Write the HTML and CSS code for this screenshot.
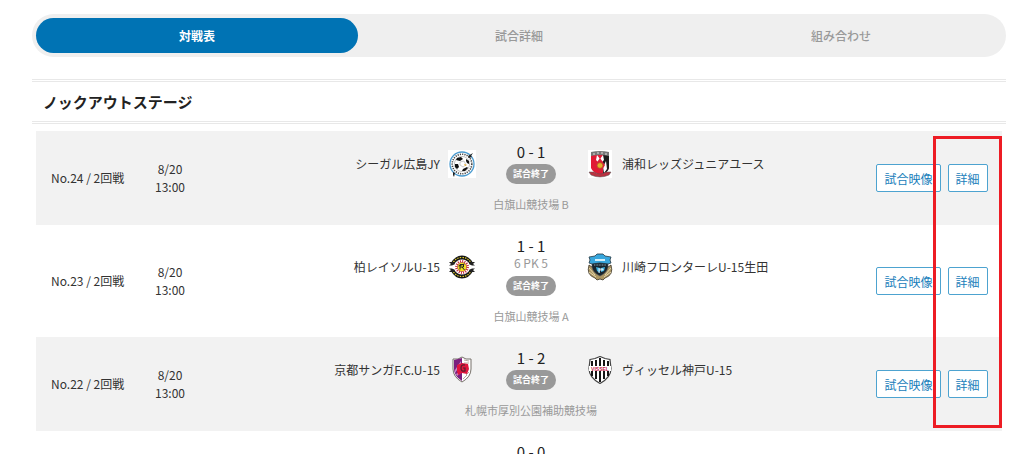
FILE: index.html
```html
<!DOCTYPE html>
<html lang="ja">
<head>
  <meta charset="UTF-8">
  <title>対戦表 - ノックアウトステージ</title>
  <meta name="viewport" content="width=device-width, initial-scale=1">
  <link rel="stylesheet" href="styles.css">
</head>
<body>
  <main class="page">
    <nav class="tabs">
      <a class="tab active" href="#table">対戦表</a>
      <a class="tab" href="#detail">試合詳細</a>
      <a class="tab" href="#bracket">組み合わせ</a>
    </nav>

    <h2 class="stage">ノックアウトステージ</h2>

    <div class="matches">
      <table class="match-table">
        <colgroup>
          <col class="col-no">
          <col class="col-date">
          <col>
          <col class="col-actions">
        </colgroup>
        <tbody>
          <tr>
            <td class="no">No.24 / 2回戦</td>
            <td class="date">8/20<br>13:00</td>
            <td>
              <div class="match">
                <div class="team home">
                  <span>シーガル広島JY</span>
                  <svg class="logo" viewBox="0 0 28 28">
                    <rect width="28" height="28" fill="#fff"/>
                    <circle cx="14" cy="14" r="12" fill="#fff" stroke="#4b9bd0" stroke-width="1.3"/>
                    <circle cx="14" cy="14" r="9.8" fill="none" stroke="#444" stroke-width="1.6" stroke-dasharray="1.2 1.1"/>
                    <circle cx="14" cy="14" r="7.6" fill="#fff" stroke="#999" stroke-width=".6"/>
                    <path d="M9 8l4-1 2 2-3 2-4-1zM18 9l3 2 0 3-2-1-1-2zM7 14l3 0 1 3-2 2-2-2zM15 19l4-2 1 1-3 3-3 0z" fill="#111"/>
                    <path d="M12 12l4-1 2 4-3 2-3-2z" fill="#fff" stroke="#999" stroke-width=".5"/>
                    <path d="M16 14l3 1-2 1z" fill="#e9a820"/>
                    <path d="M20 6l5-3-2 3 1 1-3 1zM5 22l2 1-1 4-1-2z" fill="#222"/>
                  </svg>
                </div>
                <div class="result">
                  <span class="score">0 - 1</span>
                  <span class="status">試合終了</span>
                </div>
                <div class="team away">
                  <svg class="logo" viewBox="0 0 28 28">
                    <rect x="2" width="24" height="28" fill="#fff"/>
                    <path d="M5 4q9-2 18 0v14q-2 5-9 7-7-2-9-7z" fill="#e11a35"/>
                    <path d="M17 4h6v14q-1 4-6 6z" fill="#1c1c1c"/>
                    <path d="M11 5l3 4 3-4 1 5-4 4-4-4zM17 17l3-6 1 8-3 4z" fill="#fff"/>
                    <path d="M14 8l5 7-5 9-5-9z" fill="#d8203a"/>
                    <circle cx="14" cy="15.5" r="2.8" fill="#e2b32b" stroke="#b75b22" stroke-width=".7"/>
                    <path d="M5 2q9-2 18 0v4q-9-2-18 0z" fill="#777"/>
                    <path d="M7 4h2m2-1h2m2 0h2m2 1h2" stroke="#ddd" stroke-width="1"/>
                    <path d="M3 22l5 0q6 4 12 0l5 0-2 3q-9 4-18 0z" fill="#b83240" stroke="#555" stroke-width=".5"/>
                  </svg>
                  <span>浦和レッズジュニアユース</span>
                </div>
              </div>
              <p class="venue">白旗山競技場 B</p>
            </td>
            <td class="actions">
              <div class="buttons">
                <button type="button" class="btn">試合映像</button>
                <button type="button" class="btn">詳細</button>
              </div>
            </td>
          </tr>
          <tr>
            <td class="no">No.23 / 2回戦</td>
            <td class="date">8/20<br>13:00</td>
            <td>
              <div class="match">
                <div class="team home">
                  <span>柏レイソルU-15</span>
                  <svg class="logo" viewBox="0 0 28 28">
                    <path d="M3 10Q7 2.500 14 2.500t11 7.500l-3 1.500q-3-5-8-5t-8 5zM3 18q4 7.500 11 7.500t11-7.500l-3-1.500q-3 5-8 5t-8-5z" fill="#161616"/>
                    <path d="M5.500 9q3-4.500 8.500-4.500T22.500 9M5.500 19q3 4.500 8.500 4.500t8.500-4.500" fill="none" stroke="#e8d529" stroke-width="1.200" stroke-dasharray="1.400 1.200"/>
                    <path d="M1 9h4l2 2-3 1.500H1L3 11zM27 9h-4l-2 2 3 1.500h3L25 11zM1 19h4l2-2-3-1.500H1L3 17zM27 19h-4l-2-2 3-1.500h3L25 17z" fill="#222"/>
                    <circle cx="14" cy="14" r="7" fill="#fff"/>
                    <circle cx="14" cy="14" r="5.700" fill="none" stroke="#c8233a" stroke-width="2.400" stroke-dasharray="1 1.200"/>
                    <circle cx="14" cy="14" r="4.600" fill="#f4e224" stroke="#a72b2b" stroke-width=".6"/>
                    <path d="M12 11.500v5M12 11.500h3.500v2.500H12m2 0l2.500 3M10.500 13l6-2" fill="none" stroke="#222" stroke-width="1"/>
                  </svg>
                </div>
                <div class="result">
                  <span class="score">1 - 1</span>
                  <span class="pk">6 PK 5</span>
                  <span class="status">試合終了</span>
                </div>
                <div class="team away">
                  <svg class="logo" viewBox="0 0 28 28">
                    <path d="M3 12q-3 10 6 13l2 2 3-1 3 1 2-2q9-3 6-13l-3 2H6z" fill="#ac9662" stroke="#3c3527" stroke-width=".8"/>
                    <path d="M3 15l6 7M3 19l7 5M25 15l-6 7M25 19l-7 5" stroke="#e3d6ad" stroke-width="1"/>
                    <path d="M6 6h16v8q-1 6-8 9-7-3-8-9z" fill="#17252e" stroke="#555" stroke-width=".6"/>
                    <path d="M3 4l6-1 2-2h6l2 2 6 1-1 3 1 3-3 1q-8-2-16 0l-3-1 1-3z" fill="#38a6dc" stroke="#263942" stroke-width=".8"/>
                    <path d="M9 6h10v2H9z" fill="#d4eff9"/>
                    <path d="M8 12h12" stroke="#8fa8b2" stroke-width="1" stroke-dasharray="1 .6"/>
                    <path d="M10 14l4 1v5l-3-2zM15 15l4-1-1 4-3 1z" fill="#3cb0df"/>
                    <path d="M12 16h5v1h-4v3" fill="none" stroke="#fff" stroke-width=".8"/>
                  </svg>
                  <span>川崎フロンターレU-15生田</span>
                </div>
              </div>
              <p class="venue">白旗山競技場 A</p>
            </td>
            <td class="actions">
              <div class="buttons">
                <button type="button" class="btn">試合映像</button>
                <button type="button" class="btn">詳細</button>
              </div>
            </td>
          </tr>
          <tr>
            <td class="no">No.22 / 2回戦</td>
            <td class="date">8/20<br>13:00</td>
            <td>
              <div class="match">
                <div class="team home">
                  <span>京都サンガF.C.U-15</span>
                  <svg class="logo" viewBox="0 0 28 28">
                    <path d="M5 3l5 0 4-2 4 2h5v10q0 8-9 13-9-5-9-13z" fill="#fff" stroke="#77716a" stroke-width="1"/>
                    <path d="M6 4l8-2v23q-8-5-8-12z" fill="#7b1f7e"/>
                    <path d="M7 14l6-9v3l-6 9zM8 18l5-3v2l-4 3z" fill="#c88cc7"/>
                    <path d="M16 4l5 1M16 7l5 0M18 19l3-3M15 23l4-4" stroke="#b9aaa2" stroke-width="1"/>
                    <path d="M9 9l5-2 6 1 1 5-2 5-5-1-4 2-1-4z" fill="#e0163e"/>
                    <path d="M17 9q-4-1-4 3t4 3v-3h-2" fill="none" stroke="#54202d" stroke-width="1.200"/>
                  </svg>
                </div>
                <div class="result">
                  <span class="score">1 - 2</span>
                  <span class="status">試合終了</span>
                </div>
                <div class="team away">
                  <svg class="logo" viewBox="0 0 28 28">
                    <path d="M4 3.500l5-1 5-2 5 2 5 1 1 9q0 9-11 15Q3 21.500 3 12.500z" fill="#fff" stroke="#444" stroke-width="1.200"/>
                    <path d="M6 5v15M10 4v19M14 2v24M18 4v19M22 5v15" stroke="#151515" stroke-width="2"/>
                    <path d="M3 10h22v5H3z" fill="#fff"/>
                    <text class="crest-text" x="14" y="14.500">VISSEL</text>
                  </svg>
                  <span>ヴィッセル神戸U-15</span>
                </div>
              </div>
              <p class="venue">札幌市厚別公園補助競技場</p>
            </td>
            <td class="actions">
              <div class="buttons">
                <button type="button" class="btn">試合映像</button>
                <button type="button" class="btn">詳細</button>
              </div>
            </td>
          </tr>
          <tr>
            <td></td>
            <td></td>
            <td>
              <div class="match">
                <div class="team home"></div>
                <div class="result">
                  <span class="score">0 - 0</span>
                </div>
                <div class="team away"></div>
              </div>
            </td>
            <td></td>
          </tr>
        </tbody>
      </table>
      <div class="highlight"></div>
    </div>
  </main>
</body>
</html>
```

FILE: styles.css
```css
* {
  box-sizing: border-box;
}

body {
  font-family: "Noto Sans CJK JP", sans-serif;
  font-size: 12px;
  line-height: 18px;
  background: #fff;
  color: #333;
  margin: 0;
}

.page {
  height: 100vh;
  padding: 14px 18px 0 32px;
  overflow: hidden;
}

/* tabs */
.tabs {
  display: flex;
  padding: 4px;
  background: #efefef;
  border-radius: 22px;
}

.tab {
  flex: 1;
  line-height: 35px;
  border-radius: 18px;
  color: #999;
  font-weight: 500;
  text-align: center;
  text-decoration: none;
}

.tab.active {
  background: #0073b4;
  color: #fff;
  font-weight: bold;
}

.stage {
  margin: 22px 0 7px;
  padding: 0 11px;
  border-top: 3px double #e8e8e8;
  border-bottom: 3px double #e8e8e8;
  color: #222;
  font-size: 15px;
  line-height: 39px;
}

/* match list */
.matches {
  position: relative;
  margin: 0 4px;
}

.match-table {
  width: 100%;
  table-layout: fixed;
  border-collapse: collapse;
}

.col-no {
  width: 104px;
}

.col-date {
  width: 60px;
}

.col-actions {
  width: 140px;
}

td {
  padding: 12px 0;
  vertical-align: middle;
}

tr:nth-child(odd) {
  background: #f2f2f2;
}

tr:nth-child(even) {
  background: #fff;
}

.no {
  padding-left: 15px;
  white-space: nowrap;
}

.date {
  text-align: center;
}

.match {
  display: flex;
  align-items: center;
}

.team {
  flex: 1;
  display: flex;
  align-items: center;
  gap: 8px;
}

.home {
  justify-content: flex-end;
}

.logo {
  width: 28px;
  height: 28px;
}

.crest-text {
  fill: #c41e4a;
  font: bold 5px "Liberation Sans", sans-serif;
  text-anchor: middle;
}

.result {
  width: 110px;
  display: flex;
  flex-direction: column;
  align-items: center;
}

.score {
  color: #222;
  font-size: 15px;
  line-height: 17px;
}

.pk {
  color: #999;
  line-height: 18px;
}

.status {
  margin-top: 4px;
  padding: 0 7px;
  border-radius: 10px;
  background: #999;
  color: #fff;
  font-size: 9px;
  font-weight: bold;
  line-height: 20px;
}

.venue {
  margin: 12px 0 0;
  color: #999;
  font-size: 11px;
  line-height: 17px;
  text-align: center;
}

.buttons {
  display: flex;
  justify-content: center;
  gap: 7px;
}

.btn {
  height: 28px;
  padding: 0 7px;
  border: 1px solid #4da3d0;
  border-radius: 2px;
  background: #fff;
  color: #1a80bb;
  font-family: inherit;
  font-size: 12px;
}

/* red frame over the detail buttons */
.highlight {
  position: absolute;
  top: 5px;
  right: 0;
  width: 69px;
  height: 292px;
  border: 3px solid #ed1c24;
  pointer-events: none;
}
```
